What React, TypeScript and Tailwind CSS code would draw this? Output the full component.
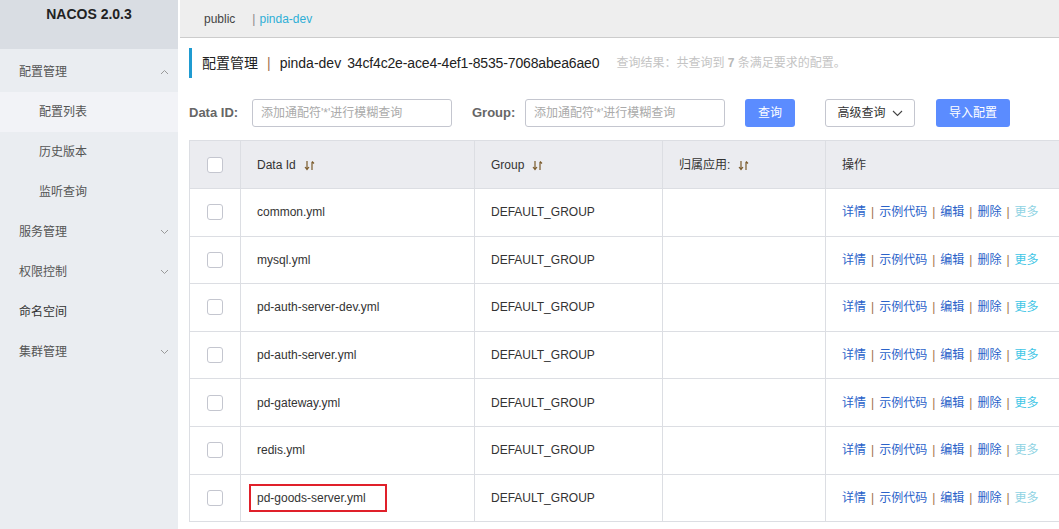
import { useState } from "react";

const menu = [
  { label: "配置管理", open: true, sub: ["配置列表", "历史版本", "监听查询"] },
  { label: "服务管理", arrow: true },
  { label: "权限控制", arrow: true },
  { label: "命名空间" },
  { label: "集群管理", arrow: true },
];

const rows = [
  { id: "common.yml", more: false },
  { id: "mysql.yml", more: true },
  { id: "pd-auth-server-dev.yml", more: true },
  { id: "pd-auth-server.yml", more: true },
  { id: "pd-gateway.yml", more: true },
  { id: "redis.yml", more: false },
  { id: "pd-goods-server.yml", more: false, mark: true },
];

function SortIcon() {
  return (
    <svg width="11" height="11" viewBox="0 0 11 11" className="ml-2 inline-block">
      <path d="M3 1v8M1 7l2 2.5L5 7" stroke="#7a5a2a" strokeWidth="1.2" fill="none" />
      <path d="M8 10V2M8 1.5l2 2" stroke="#7a5a2a" strokeWidth="1.2" fill="none" />
    </svg>
  );
}

function Chevron({ up }: { up?: boolean }) {
  return (
    <svg width="9" height="6" viewBox="0 0 9 6">
      <path d={up ? "M1 5l3.5-3.5L8 5" : "M1 1l3.5 3.5L8 1"} stroke="#999" strokeWidth="1" fill="none" />
    </svg>
  );
}

function Check() {
  return <div className="h-4 w-4 rounded-[3px] border border-[#c4c6cf] bg-white"></div>;
}

function Sep() {
  return <span className="mx-[5px] text-[#a0724a]">|</span>;
}

export default function App() {
  const [active] = useState("配置列表");
  const font = { fontFamily: '"Liberation Sans", "Noto Sans CJK SC", sans-serif' };

  return (
    <div className="flex h-[529px] w-[1059px] overflow-hidden bg-white text-[12px] text-[#333]" style={font}>
      <div className="flex w-[178px] shrink-0 flex-col bg-[#eaedf1]">
        <div className="h-[49px] bg-[#d9dde3] pt-[4px] text-center text-[14px] font-bold text-[#222]">NACOS 2.0.3</div>
        <div className="pt-[3px]">
          {menu.map((m) => (
            <div key={m.label}>
              <div className="flex h-10 items-center justify-between pl-[19px] pr-[9px] text-[#555]">
                <span className={m.label === "命名空间" ? "text-[#333]" : ""}>{m.label}</span>
                {m.open ? <Chevron up /> : m.arrow ? <Chevron /> : null}
              </div>
              {m.sub?.map((s) => (
                <div
                  key={s}
                  className={"flex h-10 items-center pl-[39px] text-[#555] " + (s === active ? "bg-[#f2f3f7] text-[#333]" : "")}
                >
                  {s}
                </div>
              ))}
            </div>
          ))}
        </div>
      </div>

      <div className="flex min-w-0 flex-1 flex-col pl-[2px]">
        <div className="flex h-[38px] shrink-0 items-center border-b border-[#cccccc] bg-[#eeeeee] pl-[24px]">
          <span className="text-[#444]">public</span>
          <span className="ml-[17px] text-[#888]">|</span>
          <span className="ml-[4px] text-[#2eaed6]">pinda-dev</span>
        </div>

        <div className="pl-[9px]">
          <div className="mt-[10px] flex h-[30px] items-center border-l-[3px] border-[#1f9bd1] pl-[10px]">
            <span className="text-[14px] text-[#222]">配置管理</span>
            <span className="mx-[9px] text-[14px] text-[#a0724a]">|</span>
            <span className="text-[14px] text-[#222]">pinda-dev</span>
            <span className="ml-[6px] text-[14px] tracking-[-0.15px] text-[#222]">34cf4c2e-ace4-4ef1-8535-7068abea6ae0</span>
            <span className="ml-[17px] text-[12px] text-[#c4c4c4]">
              查询结果：共查询到 <b className="text-[#b8b8b8]">7</b> 条满足要求的配置。
            </span>
          </div>

          <div className="mt-[21px] flex h-[28px] items-center">
            <span className="w-[63px] text-[13px] font-bold text-[#666]">Data ID:</span>
            <div className="flex h-[28px] w-[200px] items-center rounded-[3px] border border-[#c4c6cf] pl-[8px] text-[#aaa]">
              添加通配符'*'进行模糊查询
            </div>
            <span className="ml-[20px] w-[53px] text-[13px] font-bold text-[#666]">Group:</span>
            <div className="flex h-[28px] w-[200px] items-center rounded-[3px] border border-[#c4c6cf] pl-[8px] text-[#aaa]">
              添加通配符'*'进行模糊查询
            </div>
            <div className="ml-[20px] flex h-[28px] w-[50px] items-center justify-center rounded-[3px] bg-[#5b8cff] text-white">
              查询
            </div>
            <div className="ml-[30px] flex h-[28px] w-[90px] items-center justify-center gap-[6px] rounded-[3px] border border-[#c4c6cf] text-[#333]">
              高级查询
              <svg width="11" height="7" viewBox="0 0 11 7">
                <path d="M1 1l4.5 4.5L10 1" stroke="#444" strokeWidth="1.1" fill="none" />
              </svg>
            </div>
            <div className="ml-[21px] flex h-[28px] w-[74px] items-center justify-center rounded-[3px] bg-[#5b8cff] text-white">
              导入配置
            </div>
          </div>

          <table className="mt-[13px] w-[900px] border-collapse">
            <thead>
              <tr className="h-[48px] bg-[#ebecf0] text-[#333]">
                <th className="w-[51px] border border-[#dcdee3] font-normal">
                  <div className="flex justify-center"><Check /></div>
                </th>
                <th className="w-[234px] border border-[#dcdee3] pl-[16px] text-left font-normal">
                  Data Id<SortIcon />
                </th>
                <th className="w-[188px] border border-[#dcdee3] pl-[16px] text-left font-normal">
                  Group<SortIcon />
                </th>
                <th className="w-[163px] border border-[#dcdee3] pl-[16px] text-left font-normal">
                  归属应用:<SortIcon />
                </th>
                <th className="border border-[#dcdee3] pl-[16px] text-left font-normal">操作</th>
              </tr>
            </thead>
            <tbody>
              {rows.map((r) => (
                <tr key={r.id} className="h-[47.6px]">
                  <td className="border border-[#dcdee3]">
                    <div className="flex justify-center"><Check /></div>
                  </td>
                  <td className="border border-[#dcdee3] pl-[16px]">
                    {r.mark ? (
                      <span className="-ml-[8px] inline-block border-2 border-[#e0202a] py-[3px] pl-[6px] pr-[19px]">{r.id}</span>
                    ) : (
                      r.id
                    )}
                  </td>
                  <td className="border border-[#dcdee3] pl-[16px]">DEFAULT_GROUP</td>
                  <td className="border border-[#dcdee3]"></td>
                  <td className="border border-[#dcdee3] pl-[16px] text-[#2a62c9]">
                    详情<Sep />示例代码<Sep />编辑<Sep />删除<Sep />
                    <span className={r.more ? "text-[#3fc6e6]" : "text-[#8fd3e3]"}>更多</span>
                  </td>
                </tr>
              ))}
            </tbody>
          </table>
        </div>
      </div>
    </div>
  );
}
